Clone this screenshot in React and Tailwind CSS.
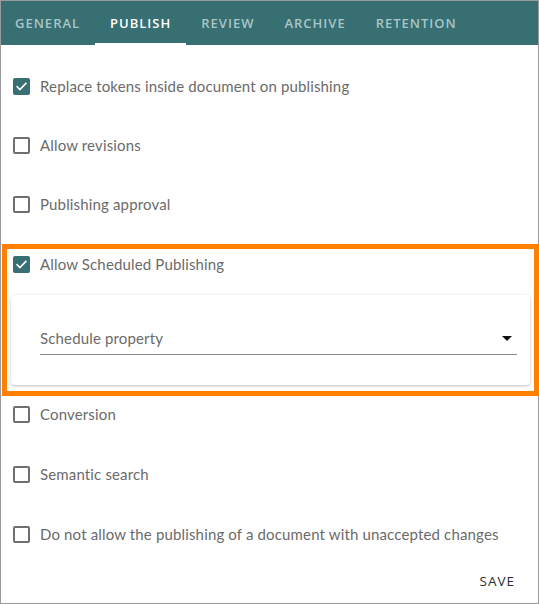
import React, { useState } from 'react';

const tabs = ["GENERAL", "PUBLISH", "REVIEW", "ARCHIVE", "RETENTION"];

const Checkbox = ({ checked }) => (
    <div
        className={`w-[17px] h-[17px] rounded-[2px] shrink-0 flex items-center justify-center ${checked ? 'bg-[#386f72]' : 'border-2 border-[#6f6f6f]'}`}
    >
        {checked && (
            <svg width="13" height="13" viewBox="0 0 24 24" fill="none">
                <path d="M4 12.5l5 5L20 6.5" stroke="white" strokeWidth="3" strokeLinecap="square" />
            </svg>
        )}
    </div>
);

const Row = ({ label, checked }) => (
    <div className="h-[20px] flex items-center gap-[10px]">
        <Checkbox checked={checked} />
        <span className="text-[15px] text-[#6b6b6b] leading-none tracking-[0.15px]">{label}</span>
    </div>
);

export default function App() {
    const [activeTab] = useState("PUBLISH");

    return (
        <div
            className="w-[539px] h-[604px] border border-[#9a9a9a] bg-white flex flex-col"
            style={{ fontFamily: 'Lato, "Open Sans", sans-serif' }}
        >
            {/* TABS */}
            <div className="h-[44px] bg-[#386f72] flex shrink-0 pt-[3px]" style={{ fontFamily: '"Open Sans", sans-serif' }}>
                {tabs.map((tab) => (
                    <div
                        key={tab}
                        className={`px-[15px] first:pl-[14px] flex items-center text-[13px] font-semibold tracking-[1px] border-b-2 ${activeTab === tab ? 'border-white text-white' : 'border-transparent text-[#a8c6c7]'}`}
                    >
                        {tab}
                    </div>
                ))}
            </div>

            {/* OPTIONS */}
            <div className="flex flex-col gap-[39px] pt-[31px] pl-[12px]">
                <Row label="Replace tokens inside document on publishing" checked />
                <Row label="Allow revisions" />
                <Row label="Publishing approval" />
            </div>

            {/* SCHEDULED PUBLISHING */}
            <div className="mt-[30px] ml-[1px] -mr-[1px] border-[5px] border-[#ff8000] flex flex-col">
                <div className="h-[30px] flex items-center pl-[6px]">
                    <Row label="Allow Scheduled Publishing" checked />
                </div>
                <div className="mt-[16px] mx-[4px] mb-[6px] h-[90px] rounded-[4px] bg-white shadow-[0_1px_3px_rgba(0,0,0,0.25)] pl-[29px] pr-[13px] pt-[32px]">
                    <div className="flex items-center justify-between border-b border-[#8a8a8a] pb-[4px]">
                        <span className="text-[15px] text-[#6b6b6b] tracking-[0.15px]">Schedule property</span>
                        <svg width="10" height="5" viewBox="0 0 10 5" className="mr-[5px]">
                            <path d="M0 0h10L5 5z" fill="#111" />
                        </svg>
                    </div>
                </div>
            </div>

            <div className="flex flex-col gap-[40px] pt-[8px] pl-[12px]">
                <Row label="Conversion" />
                <Row label="Semantic search" />
                <Row label="Do not allow the publishing of a document with unaccepted changes" />
            </div>

            {/* FOOTER */}
            <div className="flex justify-end pr-[23px] mt-[27px]">
                <button className="text-[13.5px] font-medium tracking-[1px] text-[#2b2b2b]" style={{ fontFamily: '"Open Sans", sans-serif' }}>
                    SAVE
                </button>
            </div>
        </div>
    );
}
